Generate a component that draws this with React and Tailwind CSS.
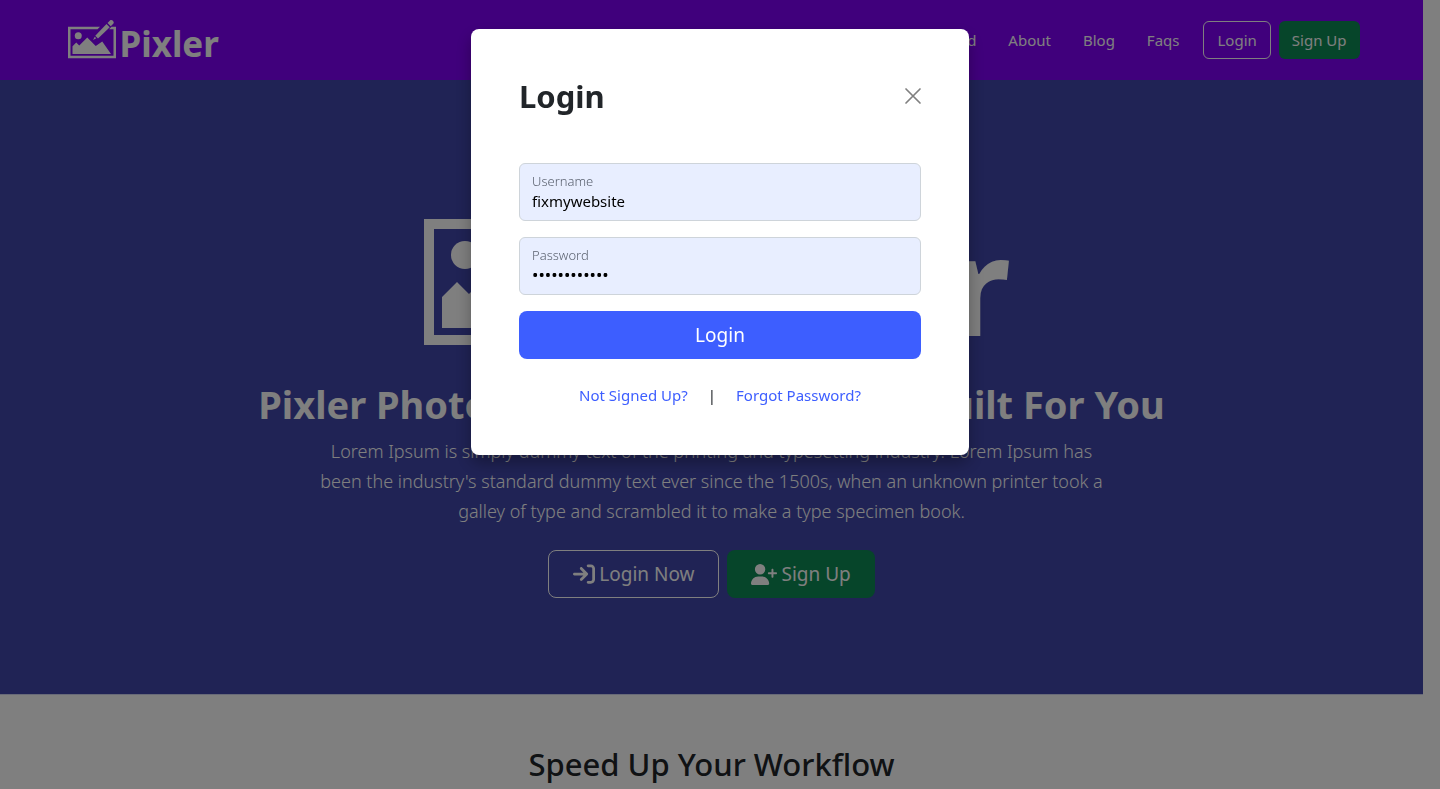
import React from "react";
import { FaArrowRightToBracket, FaUserPlus } from "react-icons/fa6";

const navLinks = ["Dashboard", "About", "Blog", "Faqs"];

const LogoMark = ({ className }) => (
  <svg viewBox="0 0 192 160" className={className} fill="currentColor" aria-hidden="true">
    <path d="M0 31h128l-10 10H10v106h172V41h-18l10-10h18v126H0z" />
    <circle cx="41" cy="67" r="14" />
    <path d="M18 140v-31l15-15 12 12 32-32 34 34 26-18 35 50z" />
    {/* pencil */}
    <path d="M100 84l7-13 6 6z" />
    <path d="M109 67l45-47 13 13-47 45z" />
    <path d="M158 16l10-10c7-7 20 6 13 13l-10 10z" />
  </svg>
);

const Navbar = () => (
  <nav className="bg-[#8000f8] text-white">
    <div className="max-w-[1320px] mx-auto px-3 h-20 flex items-center justify-between">
      <a href="#home" className="flex items-center pl-1 pb-0.5">
        <LogoMark className="w-12 h-10" />
        <span className="font-bold text-[35px] leading-none pl-1 pt-2">Pixler</span>
      </a>
      <div className="flex items-center gap-2">
        <div className="flex items-center gap-8 mr-4">
          {navLinks.map((link) => (
            <a key={link} href={"#" + link.toLowerCase()} className="text-[15px]">
              {link}
            </a>
          ))}
        </div>
        <button type="button" className="h-[38px] px-[13px] border border-white rounded-md text-[15px]">
          Login
        </button>
        <button type="button" className="h-[38px] px-[13px] bg-[#0d8a55] rounded-md text-[15px]">
          Sign Up
        </button>
      </div>
    </div>
  </nav>
);

const Hero = () => (
  <section className="bg-[#4046aa] text-white text-center px-3 pt-27 pb-24 border-b border-[#d0d4f0]">
    <div className="flex justify-center items-start mb-8 pl-3">
      <LogoMark className="w-48 h-40" />
      <span className="font-bold text-[136px] leading-[160px] pl-2 pt-4 -mb-4">Pixler</span>
    </div>
    <h1 className="text-[38px] leading-12 font-bold">
      Pixler Photo Editing Tools Specially Built For You
    </h1>
    <p className="max-w-[820px] mx-auto mt-2 mb-6 text-[18px] leading-[30px] font-light">
      Lorem Ipsum is simply dummy text of the printing and typesetting industry. Lorem Ipsum has
      <br />
      been the industry's standard dummy text ever since the 1500s, when an unknown printer took a
      <br />
      galley of type and scrambled it to make a type specimen book.
    </p>
    <div className="flex justify-center gap-2 text-[19px]">
      <button type="button" className="flex items-center gap-1 h-12 px-6 border border-white rounded-lg">
        <FaArrowRightToBracket size={22} />
        Login Now
      </button>
      <button type="button" className="flex items-center gap-1 h-12 px-6 bg-[#0d8a55] rounded-lg">
        <FaUserPlus className="w-[26px] h-[21px]" />
        Sign Up
      </button>
    </div>
  </section>
);

const Field = ({ id, label, type, value }) => (
  <div className="flex flex-col h-[58px] px-3 pt-2 bg-[#e8eeff] border border-[#ced4da] rounded-md mb-4">
    <label htmlFor={id} className="text-[13px] leading-[18px] font-light text-[#5b6270]">
      {label}
    </label>
    <input
      id={id}
      type={type}
      defaultValue={value}
      className="w-full bg-transparent text-[15px] leading-[22px] text-black outline-none [&[type=password]]:text-[17px]"
    />
  </div>
);

const LoginModal = () => (
  <div className="fixed inset-0 bg-black/50 px-3 pt-[29px]">
    <div
      role="dialog"
      aria-labelledby="login-title"
      className="w-full max-w-[498px] mx-auto p-12 bg-white rounded-lg shadow-[0_8px_16px_rgba(0,0,0,0.3)] text-[#212529]"
    >
      <div className="flex items-center justify-between mb-12">
        <h2 id="login-title" className="text-[31px] leading-[38px] font-bold">
          Login
        </h2>
        <button type="button" aria-label="Close" className="text-[#808080]">
          <svg viewBox="0 0 16 16" className="w-4 h-4 overflow-visible" stroke="currentColor" strokeWidth="1.7" strokeLinecap="round">
            <path d="M1 1l14 14M15 1L1 15" />
          </svg>
        </button>
      </div>
      <form>
        <Field id="username" label="Username" type="text" value="fixmywebsite" />
        <Field id="password" label="Password" type="password" value="fixmywebsite" />
        <button type="button" className="w-full h-12 rounded-lg bg-[#3d5eff] text-white text-[19px]">
          Login
        </button>
      </form>
      <div className="flex justify-center gap-5 mt-6 text-[15px] leading-6">
        <a href="#signup" className="text-[#3d5eff]">Not Signed Up?</a>
        <span>|</span>
        <a href="#forgot" className="text-[#3d5eff]">Forgot Password?</a>
      </div>
    </div>
  </div>
);

const App = () => (
  <div className="h-screen overflow-hidden bg-white font-['Noto_Sans','Open_Sans',sans-serif]">
    <div className="pr-[17px]">
      <Navbar />
      <Hero />
      <section className="pt-12 text-center text-[#212529]">
        <h2 className="text-[31px] leading-[42px] font-medium">Speed Up Your Workflow</h2>
      </section>
    </div>
    <LoginModal />
  </div>
);

export default App;
